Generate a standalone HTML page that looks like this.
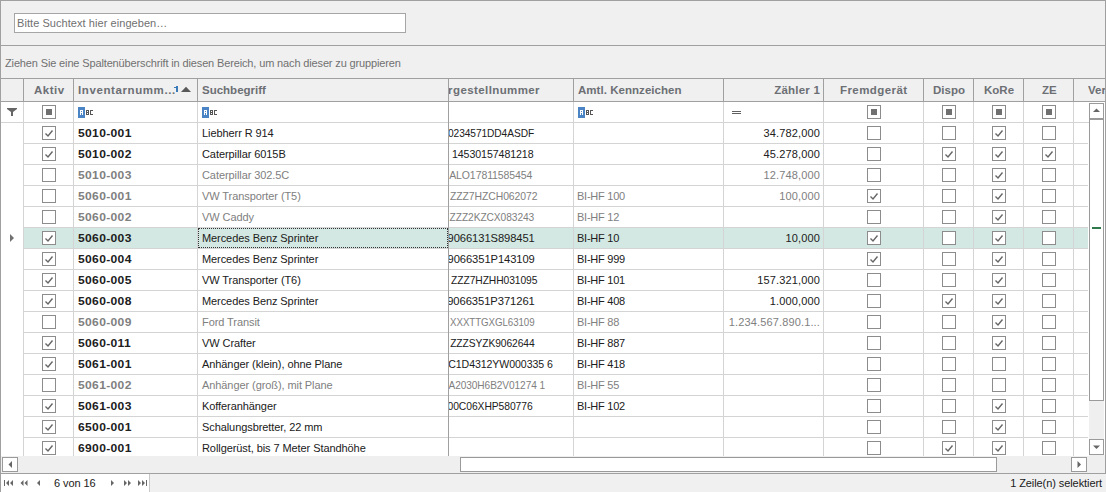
<!DOCTYPE html>
<html><head><meta charset="utf-8"><style>
*{margin:0;padding:0;box-sizing:border-box}
html,body{width:1106px;height:492px;overflow:hidden;background:#f0f0f0}
body{position:relative;font-family:"Liberation Sans",sans-serif;font-size:11px;color:#202020}
.a{position:absolute}
.hl{position:absolute;height:1px}
.vl{position:absolute;width:1px}
.t{position:absolute;white-space:nowrap;line-height:13px;letter-spacing:-0.08px}
.hd{position:absolute;white-space:nowrap;font-weight:bold;font-size:11.5px;line-height:14px;color:#6c6f74;top:83px}
.bn{font-weight:bold;letter-spacing:0.3px;transform-origin:0 50%;transform:scaleX(1.098)}
.in{color:#808080}
.cb{position:absolute;width:14px;height:14px;border:1px solid #8c8c8c;background:#fff}
svg{position:absolute;overflow:visible}
</style></head><body>

<div class="a" style="left:0;top:0;width:1106px;height:474px;border:1px solid #a0a0a0;border-bottom:none"></div>
<div class="a" style="left:14px;top:13px;width:392px;height:20px;border:1px solid #a6a6a6;background:#fff"></div>
<div class="t" style="left:17px;top:17px;color:#707070;letter-spacing:0.06px">Bitte Suchtext hier eingeben…</div>
<div class="hl" style="left:0;top:45px;width:1106px;background:#a0a0a0"></div>
<div class="t" style="left:5px;top:57px;color:#707070;letter-spacing:-0.14px">Ziehen Sie eine Spaltenüberschrift in diesen Bereich, um nach dieser zu gruppieren</div>
<div class="hl" style="left:0;top:78px;width:1106px;background:#a0a0a0"></div>
<div class="a" style="left:1px;top:79px;width:1104px;height:22px;background:#f0f0f0"></div>
<div class="hl" style="left:0;top:101px;width:1106px;background:#a0a0a0"></div>
<div class="vl" style="left:23px;top:79px;height:22px;background:#a0a0a0"></div>
<div class="vl" style="left:73px;top:79px;height:22px;background:#a0a0a0"></div>
<div class="vl" style="left:197px;top:79px;height:22px;background:#a0a0a0"></div>
<div class="vl" style="left:448px;top:79px;height:22px;background:#a0a0a0"></div>
<div class="vl" style="left:573px;top:79px;height:22px;background:#a0a0a0"></div>
<div class="vl" style="left:723px;top:79px;height:22px;background:#a0a0a0"></div>
<div class="vl" style="left:823px;top:79px;height:22px;background:#a0a0a0"></div>
<div class="vl" style="left:923px;top:79px;height:22px;background:#a0a0a0"></div>
<div class="vl" style="left:973px;top:79px;height:22px;background:#a0a0a0"></div>
<div class="vl" style="left:1023px;top:79px;height:22px;background:#a0a0a0"></div>
<div class="vl" style="left:1073px;top:79px;height:22px;background:#a0a0a0"></div>
<div class="a" style="left:1px;top:102px;width:1088px;height:354px;background:#fff"></div>
<div class="a" style="left:1089px;top:102px;width:16px;height:353px;background:#fff"></div>
<div class="hd" style="left:34px;letter-spacing:0.5px">Aktiv</div>
<div class="hd" style="left:78px;letter-spacing:0.6px">Inventarnumm...</div>
<svg style="left:0;top:0" width="1" height="1" shape-rendering="crispEdges"><rect x="176" y="86" width="2" height="6" fill="#3a7ab8"/><rect x="174" y="87" width="2" height="1" fill="#3a7ab8"/></svg>
<svg style="left:0;top:0" width="1" height="1"><path d="M181 92 L186 86.8 L191 92 Z" fill="#585858"/></svg>
<div class="hd" style="left:202px;letter-spacing:0px">Suchbegriff</div>
<div class="hd" style="left:449px;width:124px;height:16px;overflow:hidden"><span style="position:absolute;right:33px;letter-spacing:0.4px">Fahrgestellnummer</span></div>
<div class="hd" style="left:578px;letter-spacing:0.04px">Amtl. Kennzeichen</div>
<div class="hd" style="right:286px;letter-spacing:0.2px">Zähler 1</div>
<div class="hd" style="left:840px;letter-spacing:0.42px">Fremdgerät</div>
<div class="hd" style="left:933px;letter-spacing:0px">Dispo</div>
<div class="hd" style="left:984px">KoRe</div>
<div class="hd" style="left:1042px">ZE</div>
<div class="hd" style="left:1088px;width:17px;overflow:hidden">Verfügbar</div>
<div class="a" style="left:1px;top:102px;width:1088px;height:354px;overflow:hidden">
<div class="hl" style="left:0;top:20px;width:1088px;background:#d4d4d4"></div>
<div class="a" style="left:23px;top:126px;width:1064px;height:20px;background:#d3e8e2"></div>
<div class="vl" style="left:22px;top:0;height:354px;background:#d4d4d4"></div>
<div class="vl" style="left:72px;top:0;height:354px;background:#d4d4d4"></div>
<div class="vl" style="left:196px;top:0;height:354px;background:#d4d4d4"></div>
<div class="vl" style="left:447px;top:0;height:354px;background:#a0a0a0"></div>
<div class="vl" style="left:572px;top:0;height:354px;background:#d4d4d4"></div>
<div class="vl" style="left:722px;top:0;height:354px;background:#d4d4d4"></div>
<div class="vl" style="left:822px;top:0;height:354px;background:#d4d4d4"></div>
<div class="vl" style="left:922px;top:0;height:354px;background:#d4d4d4"></div>
<div class="vl" style="left:972px;top:0;height:354px;background:#d4d4d4"></div>
<div class="vl" style="left:1022px;top:0;height:354px;background:#d4d4d4"></div>
<div class="vl" style="left:1072px;top:0;height:354px;background:#d4d4d4"></div>
<svg style="left:-1px;top:-102px" width="1" height="1"><path d="M7 108 H17 V109 L13 112 V116 H11 V112 L7 109 Z" fill="#666"/></svg>
<svg style="left:77px;top:5px" width="16" height="11" shape-rendering="crispEdges"><rect x="0" y="0" width="7" height="11" fill="#4a84c4"/><rect x="2" y="3" width="3" height="1" fill="#fff"/><rect x="2" y="3" width="1" height="5" fill="#fff"/><rect x="4" y="3" width="1" height="5" fill="#fff"/><rect x="2" y="5" width="3" height="1" fill="#fff"/><rect x="8" y="3" width="3" height="1" fill="#555"/><rect x="8" y="3" width="1" height="5" fill="#555"/><rect x="10" y="3" width="1" height="5" fill="#555"/><rect x="8" y="5" width="3" height="1" fill="#555"/><rect x="8" y="7" width="3" height="1" fill="#555"/><rect x="12" y="3" width="3" height="1" fill="#555"/><rect x="12" y="3" width="1" height="5" fill="#555"/><rect x="12" y="7" width="3" height="1" fill="#555"/></svg>
<svg style="left:201px;top:5px" width="16" height="11" shape-rendering="crispEdges"><rect x="0" y="0" width="7" height="11" fill="#4a84c4"/><rect x="2" y="3" width="3" height="1" fill="#fff"/><rect x="2" y="3" width="1" height="5" fill="#fff"/><rect x="4" y="3" width="1" height="5" fill="#fff"/><rect x="2" y="5" width="3" height="1" fill="#fff"/><rect x="8" y="3" width="3" height="1" fill="#555"/><rect x="8" y="3" width="1" height="5" fill="#555"/><rect x="10" y="3" width="1" height="5" fill="#555"/><rect x="8" y="5" width="3" height="1" fill="#555"/><rect x="8" y="7" width="3" height="1" fill="#555"/><rect x="12" y="3" width="3" height="1" fill="#555"/><rect x="12" y="3" width="1" height="5" fill="#555"/><rect x="12" y="7" width="3" height="1" fill="#555"/></svg>
<svg style="left:577px;top:5px" width="16" height="11" shape-rendering="crispEdges"><rect x="0" y="0" width="7" height="11" fill="#4a84c4"/><rect x="2" y="3" width="3" height="1" fill="#fff"/><rect x="2" y="3" width="1" height="5" fill="#fff"/><rect x="4" y="3" width="1" height="5" fill="#fff"/><rect x="2" y="5" width="3" height="1" fill="#fff"/><rect x="8" y="3" width="3" height="1" fill="#555"/><rect x="8" y="3" width="1" height="5" fill="#555"/><rect x="10" y="3" width="1" height="5" fill="#555"/><rect x="8" y="5" width="3" height="1" fill="#555"/><rect x="8" y="7" width="3" height="1" fill="#555"/><rect x="12" y="3" width="3" height="1" fill="#555"/><rect x="12" y="3" width="1" height="5" fill="#555"/><rect x="12" y="7" width="3" height="1" fill="#555"/></svg>
<svg style="left:731px;top:9px" width="10" height="4"><path d="M0 0.5 H9 M0 2.5 H9" stroke="#606060" stroke-width="1"/></svg>
<div class="cb" style="left:41px;top:3px"></div><div class="a" style="left:45px;top:7px;width:6px;height:6px;background:#707070"></div>
<div class="cb" style="left:866px;top:3px"></div><div class="a" style="left:870px;top:7px;width:6px;height:6px;background:#707070"></div>
<div class="cb" style="left:941px;top:3px"></div><div class="a" style="left:945px;top:7px;width:6px;height:6px;background:#707070"></div>
<div class="cb" style="left:991px;top:3px"></div><div class="a" style="left:995px;top:7px;width:6px;height:6px;background:#707070"></div>
<div class="cb" style="left:1041px;top:3px"></div><div class="a" style="left:1045px;top:7px;width:6px;height:6px;background:#707070"></div>
<div class="hl" style="left:23px;top:41px;width:1064px;background:#d4d4d4"></div>
<div class="t bn" style="left:77px;top:25px">5010-001</div>
<div class="t" style="left:201px;top:25px">Liebherr R 914</div>
<div class="a" style="left:448px;top:21px;width:124px;height:20px;overflow:hidden"><div class="t" style="right:38.50px;top:4px;transform-origin:100% 50%;transform:scaleX(0.9249)">0234571DD4ASDF</div></div>
<div class="t" style="right:269px;top:25px;letter-spacing:0.14px">34.782,000</div>
<div class="cb" style="left:41px;top:24px"></div><svg style="left:41px;top:24px" width="14" height="14"><path d="M3.5 7.5 L6 10 L10.5 4.5" fill="none" stroke="#666" stroke-width="1.4"/></svg>
<div class="cb" style="left:866px;top:24px"></div>
<div class="cb" style="left:941px;top:24px"></div>
<div class="cb" style="left:991px;top:24px"></div><svg style="left:991px;top:24px" width="14" height="14"><path d="M3.5 7.5 L6 10 L10.5 4.5" fill="none" stroke="#666" stroke-width="1.4"/></svg>
<div class="cb" style="left:1041px;top:24px"></div>
<div class="hl" style="left:23px;top:62px;width:1064px;background:#d4d4d4"></div>
<div class="t bn" style="left:77px;top:46px">5010-002</div>
<div class="t" style="left:201px;top:46px">Caterpillar 6015B</div>
<div class="a" style="left:448px;top:42px;width:124px;height:20px;overflow:hidden"><div class="t" style="right:39.40px;top:4px;transform-origin:100% 50%;transform:scaleX(0.9652)">14530157481218</div></div>
<div class="t" style="right:269px;top:46px;letter-spacing:0.14px">45.278,000</div>
<div class="cb" style="left:41px;top:45px"></div><svg style="left:41px;top:45px" width="14" height="14"><path d="M3.5 7.5 L6 10 L10.5 4.5" fill="none" stroke="#666" stroke-width="1.4"/></svg>
<div class="cb" style="left:866px;top:45px"></div>
<div class="cb" style="left:941px;top:45px"></div><svg style="left:941px;top:45px" width="14" height="14"><path d="M3.5 7.5 L6 10 L10.5 4.5" fill="none" stroke="#666" stroke-width="1.4"/></svg>
<div class="cb" style="left:991px;top:45px"></div><svg style="left:991px;top:45px" width="14" height="14"><path d="M3.5 7.5 L6 10 L10.5 4.5" fill="none" stroke="#666" stroke-width="1.4"/></svg>
<div class="cb" style="left:1041px;top:45px"></div><svg style="left:1041px;top:45px" width="14" height="14"><path d="M3.5 7.5 L6 10 L10.5 4.5" fill="none" stroke="#666" stroke-width="1.4"/></svg>
<div class="hl" style="left:23px;top:83px;width:1064px;background:#d4d4d4"></div>
<div class="t bn in" style="left:77px;top:67px">5010-003</div>
<div class="t in" style="left:201px;top:67px">Caterpillar 302.5C</div>
<div class="a" style="left:448px;top:63px;width:124px;height:20px;overflow:hidden"><div class="t in" style="right:41.10px;top:4px;transform-origin:100% 50%;transform:scaleX(0.9527)">ALO17811585454</div></div>
<div class="t in" style="right:269px;top:67px;letter-spacing:0.14px">12.748,000</div>
<div class="cb" style="left:41px;top:66px"></div>
<div class="cb" style="left:866px;top:66px"></div>
<div class="cb" style="left:941px;top:66px"></div>
<div class="cb" style="left:991px;top:66px"></div><svg style="left:991px;top:66px" width="14" height="14"><path d="M3.5 7.5 L6 10 L10.5 4.5" fill="none" stroke="#666" stroke-width="1.4"/></svg>
<div class="cb" style="left:1041px;top:66px"></div>
<div class="hl" style="left:23px;top:104px;width:1064px;background:#d4d4d4"></div>
<div class="t bn in" style="left:77px;top:88px">5060-001</div>
<div class="t in" style="left:201px;top:88px">VW Transporter (T5)</div>
<div class="a" style="left:448px;top:84px;width:124px;height:20px;overflow:hidden"><div class="t in" style="right:36.00px;top:4px;transform-origin:100% 50%;transform:scaleX(0.9456)">ZZZ7HZCH062072</div></div>
<div class="t in" style="left:576px;top:88px;letter-spacing:-0.25px">BI-HF 100</div>
<div class="t in" style="right:269px;top:88px;letter-spacing:0.14px">100,000</div>
<div class="cb" style="left:41px;top:87px"></div>
<div class="cb" style="left:866px;top:87px"></div><svg style="left:866px;top:87px" width="14" height="14"><path d="M3.5 7.5 L6 10 L10.5 4.5" fill="none" stroke="#666" stroke-width="1.4"/></svg>
<div class="cb" style="left:941px;top:87px"></div>
<div class="cb" style="left:991px;top:87px"></div><svg style="left:991px;top:87px" width="14" height="14"><path d="M3.5 7.5 L6 10 L10.5 4.5" fill="none" stroke="#666" stroke-width="1.4"/></svg>
<div class="cb" style="left:1041px;top:87px"></div>
<div class="hl" style="left:23px;top:125px;width:1064px;background:#d4d4d4"></div>
<div class="t bn in" style="left:77px;top:109px">5060-002</div>
<div class="t in" style="left:201px;top:109px">VW Caddy</div>
<div class="a" style="left:448px;top:105px;width:124px;height:20px;overflow:hidden"><div class="t in" style="right:38.50px;top:4px;transform-origin:100% 50%;transform:scaleX(0.9279)">ZZZ2KZCX083243</div></div>
<div class="t in" style="left:576px;top:109px;letter-spacing:-0.25px">BI-HF 12</div>
<div class="cb" style="left:41px;top:108px"></div>
<div class="cb" style="left:866px;top:108px"></div>
<div class="cb" style="left:941px;top:108px"></div>
<div class="cb" style="left:991px;top:108px"></div><svg style="left:991px;top:108px" width="14" height="14"><path d="M3.5 7.5 L6 10 L10.5 4.5" fill="none" stroke="#666" stroke-width="1.4"/></svg>
<div class="cb" style="left:1041px;top:108px"></div>
<div class="hl" style="left:23px;top:146px;width:1064px;background:#d4d4d4"></div>
<div class="t bn" style="left:77px;top:130px">5060-003</div>
<div class="t" style="left:201px;top:130px">Mercedes Benz Sprinter</div>
<div class="a" style="left:448px;top:126px;width:124px;height:20px;overflow:hidden"><div class="t" style="right:38.50px;top:4px;transform-origin:100% 50%;transform:scaleX(1.0168)">9066131S898451</div></div>
<div class="t" style="left:576px;top:130px;letter-spacing:-0.25px">BI-HF 10</div>
<div class="t" style="right:269px;top:130px;letter-spacing:0.14px">10,000</div>
<div class="cb" style="left:41px;top:129px"></div><svg style="left:41px;top:129px" width="14" height="14"><path d="M3.5 7.5 L6 10 L10.5 4.5" fill="none" stroke="#666" stroke-width="1.4"/></svg>
<div class="cb" style="left:866px;top:129px"></div><svg style="left:866px;top:129px" width="14" height="14"><path d="M3.5 7.5 L6 10 L10.5 4.5" fill="none" stroke="#666" stroke-width="1.4"/></svg>
<div class="cb" style="left:941px;top:129px"></div>
<div class="cb" style="left:991px;top:129px"></div><svg style="left:991px;top:129px" width="14" height="14"><path d="M3.5 7.5 L6 10 L10.5 4.5" fill="none" stroke="#666" stroke-width="1.4"/></svg>
<div class="cb" style="left:1041px;top:129px"></div>
<div class="a" style="left:197px;top:126px;width:250px;height:20px;border:1px dotted #333"></div>
<svg style="left:9px;top:132px" width="5" height="8"><path d="M0 0 L4 4 L0 8 Z" fill="#707070"/></svg>
<div class="hl" style="left:23px;top:167px;width:1064px;background:#d4d4d4"></div>
<div class="t bn" style="left:77px;top:151px">5060-004</div>
<div class="t" style="left:201px;top:151px">Mercedes Benz Sprinter</div>
<div class="a" style="left:448px;top:147px;width:124px;height:20px;overflow:hidden"><div class="t" style="right:38.50px;top:4px;transform-origin:100% 50%;transform:scaleX(1.0168)">9066351P143109</div></div>
<div class="t" style="left:576px;top:151px;letter-spacing:-0.25px">BI-HF 999</div>
<div class="cb" style="left:41px;top:150px"></div><svg style="left:41px;top:150px" width="14" height="14"><path d="M3.5 7.5 L6 10 L10.5 4.5" fill="none" stroke="#666" stroke-width="1.4"/></svg>
<div class="cb" style="left:866px;top:150px"></div><svg style="left:866px;top:150px" width="14" height="14"><path d="M3.5 7.5 L6 10 L10.5 4.5" fill="none" stroke="#666" stroke-width="1.4"/></svg>
<div class="cb" style="left:941px;top:150px"></div>
<div class="cb" style="left:991px;top:150px"></div><svg style="left:991px;top:150px" width="14" height="14"><path d="M3.5 7.5 L6 10 L10.5 4.5" fill="none" stroke="#666" stroke-width="1.4"/></svg>
<div class="cb" style="left:1041px;top:150px"></div>
<div class="hl" style="left:23px;top:188px;width:1064px;background:#d4d4d4"></div>
<div class="t bn" style="left:77px;top:172px">5060-005</div>
<div class="t" style="left:201px;top:172px">VW Transporter (T6)</div>
<div class="a" style="left:448px;top:168px;width:124px;height:20px;overflow:hidden"><div class="t" style="right:36.00px;top:4px;transform-origin:100% 50%;transform:scaleX(0.9348)">ZZZ7HZHH031095</div></div>
<div class="t" style="left:576px;top:172px;letter-spacing:-0.25px">BI-HF 101</div>
<div class="t" style="right:269px;top:172px;letter-spacing:0.14px">157.321,000</div>
<div class="cb" style="left:41px;top:171px"></div><svg style="left:41px;top:171px" width="14" height="14"><path d="M3.5 7.5 L6 10 L10.5 4.5" fill="none" stroke="#666" stroke-width="1.4"/></svg>
<div class="cb" style="left:866px;top:171px"></div>
<div class="cb" style="left:941px;top:171px"></div>
<div class="cb" style="left:991px;top:171px"></div><svg style="left:991px;top:171px" width="14" height="14"><path d="M3.5 7.5 L6 10 L10.5 4.5" fill="none" stroke="#666" stroke-width="1.4"/></svg>
<div class="cb" style="left:1041px;top:171px"></div>
<div class="hl" style="left:23px;top:209px;width:1064px;background:#d4d4d4"></div>
<div class="t bn" style="left:77px;top:193px">5060-008</div>
<div class="t" style="left:201px;top:193px">Mercedes Benz Sprinter</div>
<div class="a" style="left:448px;top:189px;width:124px;height:20px;overflow:hidden"><div class="t" style="right:38.10px;top:4px;transform-origin:100% 50%;transform:scaleX(1.0214)">9066351P371261</div></div>
<div class="t" style="left:576px;top:193px;letter-spacing:-0.25px">BI-HF 408</div>
<div class="t" style="right:269px;top:193px;letter-spacing:0.14px">1.000,000</div>
<div class="cb" style="left:41px;top:192px"></div><svg style="left:41px;top:192px" width="14" height="14"><path d="M3.5 7.5 L6 10 L10.5 4.5" fill="none" stroke="#666" stroke-width="1.4"/></svg>
<div class="cb" style="left:866px;top:192px"></div>
<div class="cb" style="left:941px;top:192px"></div><svg style="left:941px;top:192px" width="14" height="14"><path d="M3.5 7.5 L6 10 L10.5 4.5" fill="none" stroke="#666" stroke-width="1.4"/></svg>
<div class="cb" style="left:991px;top:192px"></div><svg style="left:991px;top:192px" width="14" height="14"><path d="M3.5 7.5 L6 10 L10.5 4.5" fill="none" stroke="#666" stroke-width="1.4"/></svg>
<div class="cb" style="left:1041px;top:192px"></div>
<div class="hl" style="left:23px;top:230px;width:1064px;background:#d4d4d4"></div>
<div class="t bn in" style="left:77px;top:214px">5060-009</div>
<div class="t in" style="left:201px;top:214px">Ford Transit</div>
<div class="a" style="left:448px;top:210px;width:124px;height:20px;overflow:hidden"><div class="t in" style="right:38.60px;top:4px;transform-origin:100% 50%;transform:scaleX(0.8837)">XXXTTGXGL63109</div></div>
<div class="t in" style="left:576px;top:214px;letter-spacing:-0.25px">BI-HF 88</div>
<div class="t in" style="right:269px;top:214px;letter-spacing:0.14px">1.234.567.890.1...</div>
<div class="cb" style="left:41px;top:213px"></div>
<div class="cb" style="left:866px;top:213px"></div>
<div class="cb" style="left:941px;top:213px"></div>
<div class="cb" style="left:991px;top:213px"></div><svg style="left:991px;top:213px" width="14" height="14"><path d="M3.5 7.5 L6 10 L10.5 4.5" fill="none" stroke="#666" stroke-width="1.4"/></svg>
<div class="cb" style="left:1041px;top:213px"></div>
<div class="hl" style="left:23px;top:251px;width:1064px;background:#d4d4d4"></div>
<div class="t bn" style="left:77px;top:235px">5060-011</div>
<div class="t" style="left:201px;top:235px">VW Crafter</div>
<div class="a" style="left:448px;top:231px;width:124px;height:20px;overflow:hidden"><div class="t" style="right:38.60px;top:4px;transform-origin:100% 50%;transform:scaleX(0.9323)">ZZZSYZK9062644</div></div>
<div class="t" style="left:576px;top:235px;letter-spacing:-0.25px">BI-HF 887</div>
<div class="cb" style="left:41px;top:234px"></div><svg style="left:41px;top:234px" width="14" height="14"><path d="M3.5 7.5 L6 10 L10.5 4.5" fill="none" stroke="#666" stroke-width="1.4"/></svg>
<div class="cb" style="left:866px;top:234px"></div>
<div class="cb" style="left:941px;top:234px"></div>
<div class="cb" style="left:991px;top:234px"></div><svg style="left:991px;top:234px" width="14" height="14"><path d="M3.5 7.5 L6 10 L10.5 4.5" fill="none" stroke="#666" stroke-width="1.4"/></svg>
<div class="cb" style="left:1041px;top:234px"></div>
<div class="hl" style="left:23px;top:272px;width:1064px;background:#d4d4d4"></div>
<div class="t bn" style="left:77px;top:256px">5061-001</div>
<div class="t" style="left:201px;top:256px">Anhänger (klein), ohne Plane</div>
<div class="a" style="left:448px;top:252px;width:124px;height:20px;overflow:hidden"><div class="t" style="right:20.40px;top:4px;transform-origin:100% 50%;transform:scaleX(0.9612)">C1D4312YW000335 6</div></div>
<div class="t" style="left:576px;top:256px;letter-spacing:-0.25px">BI-HF 418</div>
<div class="cb" style="left:41px;top:255px"></div><svg style="left:41px;top:255px" width="14" height="14"><path d="M3.5 7.5 L6 10 L10.5 4.5" fill="none" stroke="#666" stroke-width="1.4"/></svg>
<div class="cb" style="left:866px;top:255px"></div>
<div class="cb" style="left:941px;top:255px"></div>
<div class="cb" style="left:991px;top:255px"></div>
<div class="cb" style="left:1041px;top:255px"></div>
<div class="hl" style="left:23px;top:293px;width:1064px;background:#d4d4d4"></div>
<div class="t bn in" style="left:77px;top:277px">5061-002</div>
<div class="t in" style="left:201px;top:277px">Anhänger (groß), mit Plane</div>
<div class="a" style="left:448px;top:273px;width:124px;height:20px;overflow:hidden"><div class="t in" style="right:28.20px;top:4px;transform-origin:100% 50%;transform:scaleX(0.9194)">A2030H6B2V01274 1</div></div>
<div class="t in" style="left:576px;top:277px;letter-spacing:-0.25px">BI-HF 55</div>
<div class="cb" style="left:41px;top:276px"></div>
<div class="cb" style="left:866px;top:276px"></div>
<div class="cb" style="left:941px;top:276px"></div>
<div class="cb" style="left:991px;top:276px"></div>
<div class="cb" style="left:1041px;top:276px"></div>
<div class="hl" style="left:23px;top:314px;width:1064px;background:#d4d4d4"></div>
<div class="t bn" style="left:77px;top:298px">5061-003</div>
<div class="t" style="left:201px;top:298px">Kofferanhänger</div>
<div class="a" style="left:448px;top:294px;width:124px;height:20px;overflow:hidden"><div class="t" style="right:40.00px;top:4px;transform-origin:100% 50%;transform:scaleX(0.9389)">00C06XHP580776</div></div>
<div class="t" style="left:576px;top:298px;letter-spacing:-0.25px">BI-HF 102</div>
<div class="cb" style="left:41px;top:297px"></div><svg style="left:41px;top:297px" width="14" height="14"><path d="M3.5 7.5 L6 10 L10.5 4.5" fill="none" stroke="#666" stroke-width="1.4"/></svg>
<div class="cb" style="left:866px;top:297px"></div>
<div class="cb" style="left:941px;top:297px"></div>
<div class="cb" style="left:991px;top:297px"></div><svg style="left:991px;top:297px" width="14" height="14"><path d="M3.5 7.5 L6 10 L10.5 4.5" fill="none" stroke="#666" stroke-width="1.4"/></svg>
<div class="cb" style="left:1041px;top:297px"></div>
<div class="hl" style="left:23px;top:335px;width:1064px;background:#d4d4d4"></div>
<div class="t bn" style="left:77px;top:319px">6500-001</div>
<div class="t" style="left:201px;top:319px">Schalungsbretter, 22 mm</div>
<div class="cb" style="left:41px;top:318px"></div><svg style="left:41px;top:318px" width="14" height="14"><path d="M3.5 7.5 L6 10 L10.5 4.5" fill="none" stroke="#666" stroke-width="1.4"/></svg>
<div class="cb" style="left:866px;top:318px"></div>
<div class="cb" style="left:941px;top:318px"></div>
<div class="cb" style="left:991px;top:318px"></div><svg style="left:991px;top:318px" width="14" height="14"><path d="M3.5 7.5 L6 10 L10.5 4.5" fill="none" stroke="#666" stroke-width="1.4"/></svg>
<div class="cb" style="left:1041px;top:318px"></div>
<div class="hl" style="left:23px;top:356px;width:1064px;background:#d4d4d4"></div>
<div class="t bn" style="left:77px;top:340px">6900-001</div>
<div class="t" style="left:201px;top:340px">Rollgerüst, bis 7 Meter Standhöhe</div>
<div class="cb" style="left:41px;top:339px"></div><svg style="left:41px;top:339px" width="14" height="14"><path d="M3.5 7.5 L6 10 L10.5 4.5" fill="none" stroke="#666" stroke-width="1.4"/></svg>
<div class="cb" style="left:866px;top:339px"></div>
<div class="cb" style="left:941px;top:339px"></div><svg style="left:941px;top:339px" width="14" height="14"><path d="M3.5 7.5 L6 10 L10.5 4.5" fill="none" stroke="#666" stroke-width="1.4"/></svg>
<div class="cb" style="left:991px;top:339px"></div><svg style="left:991px;top:339px" width="14" height="14"><path d="M3.5 7.5 L6 10 L10.5 4.5" fill="none" stroke="#666" stroke-width="1.4"/></svg>
<div class="cb" style="left:1041px;top:339px"></div>
<div class="vl" style="left:447px;top:0;height:354px;background:#a0a0a0"></div>
</div>
<div class="a" style="left:1089px;top:103px;width:15px;height:352px;background:#efefef"></div>
<div class="a" style="left:1089px;top:103px;width:15px;height:16px;border:1px solid #9a9a9a;background:#fff"></div>
<svg style="left:1093px;top:108px" width="8" height="5"><path d="M0 4 L3.5 0.5 L7 4 Z" fill="#666"/></svg>
<div class="a" style="left:1089px;top:119px;width:15px;height:282px;border:1px solid #9a9a9a;background:#fff"></div>
<div class="a" style="left:1092px;top:227px;width:9px;height:2px;background:#2f7a4c"></div>
<div class="a" style="left:1089px;top:439px;width:15px;height:16px;border:1px solid #9a9a9a;background:#fff"></div>
<svg style="left:1093px;top:445px" width="8" height="5"><path d="M0 0.5 L3.5 4 L7 0.5 Z" fill="#666"/></svg>
<div class="a" style="left:1px;top:456px;width:1104px;height:17px;background:#efefef"></div>
<div class="a" style="left:2px;top:457px;width:16px;height:15px;border:1px solid #9a9a9a;background:#fff"></div>
<svg style="left:8px;top:461px" width="5" height="8"><path d="M4 0 L0.5 3.5 L4 7 Z" fill="#666"/></svg>
<div class="a" style="left:460px;top:457px;width:537px;height:15px;border:1px solid #9a9a9a;background:#fff"></div>
<div class="a" style="left:1071px;top:457px;width:16px;height:15px;border:1px solid #9a9a9a;background:#fff"></div>
<svg style="left:1077px;top:461px" width="5" height="8"><path d="M0.5 0 L4 3.5 L0.5 7 Z" fill="#666"/></svg>
<div class="hl" style="left:0;top:473px;width:1106px;background:#a0a0a0"></div>
<div class="vl" style="left:0;top:473px;height:19px;background:#a0a0a0"></div>
<div class="a" style="left:1px;top:474px;width:149px;height:18px;background:#fff;border-right:1px solid #c8c8c8"></div>
<svg style="left:0;top:0" width="1" height="1" fill="#666"><rect x="4" y="480" width="1" height="6"/><path d="M9 480 L6 483 L9 486 Z M13 480 L10 483 L13 486 Z"/><path d="M23.5 480 L20.5 483 L23.5 486 Z M27.5 480 L24.5 483 L27.5 486 Z"/><path d="M40 480 L37 483 L40 486 Z"/><path d="M111 480 L114 483 L111 486 Z"/><path d="M124 480 L127 483 L124 486 Z M128 480 L131 483 L128 486 Z"/><path d="M138 480 L141 483 L138 486 Z M142 480 L145 483 L142 486 Z"/><rect x="146" y="480" width="1" height="6"/></svg>
<div class="t" style="left:54px;top:477px;color:#202020">6 von 16</div>
<div class="t" style="right:4px;top:477px;color:#202020">1 Zeile(n) selektiert</div>
</body></html>
